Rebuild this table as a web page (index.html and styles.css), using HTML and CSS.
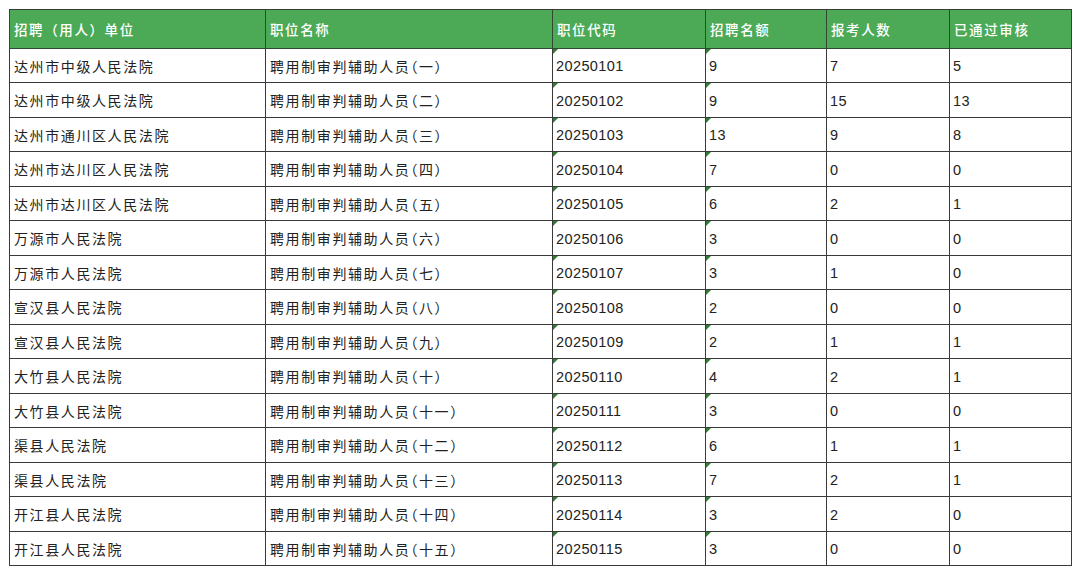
FILE: index.html
```html
<!DOCTYPE html>
<html lang="zh-CN">
<head>
<meta charset="utf-8">
<title>招聘审核</title>
<link rel="stylesheet" href="styles.css">
</head>
<body>
<table class="grid">
<colgroup>
<col class="c1"><col class="c2"><col class="c3"><col class="c4"><col class="c5"><col class="c6">
</colgroup>
<thead>
<tr><th>招聘（用人）单位</th><th>职位名称</th><th>职位代码</th><th>招聘名额</th><th>报考人数</th><th>已通过审核</th></tr>
</thead>
<tbody>
<tr><td>达州市中级人民法院</td><td>聘用制审判辅助人员（一）</td><td class="num mark">20250101</td><td class="num mark">9</td><td class="num">7</td><td class="num">5</td></tr>
<tr><td>达州市中级人民法院</td><td>聘用制审判辅助人员（二）</td><td class="num mark">20250102</td><td class="num mark">9</td><td class="num">15</td><td class="num">13</td></tr>
<tr><td>达州市通川区人民法院</td><td>聘用制审判辅助人员（三）</td><td class="num mark">20250103</td><td class="num mark">13</td><td class="num">9</td><td class="num">8</td></tr>
<tr><td>达州市达川区人民法院</td><td>聘用制审判辅助人员（四）</td><td class="num mark">20250104</td><td class="num mark">7</td><td class="num">0</td><td class="num">0</td></tr>
<tr><td>达州市达川区人民法院</td><td>聘用制审判辅助人员（五）</td><td class="num mark">20250105</td><td class="num mark">6</td><td class="num">2</td><td class="num">1</td></tr>
<tr><td>万源市人民法院</td><td>聘用制审判辅助人员（六）</td><td class="num mark">20250106</td><td class="num mark">3</td><td class="num">0</td><td class="num">0</td></tr>
<tr><td>万源市人民法院</td><td>聘用制审判辅助人员（七）</td><td class="num mark">20250107</td><td class="num mark">3</td><td class="num">1</td><td class="num">0</td></tr>
<tr><td>宣汉县人民法院</td><td>聘用制审判辅助人员（八）</td><td class="num mark">20250108</td><td class="num mark">2</td><td class="num">0</td><td class="num">0</td></tr>
<tr><td>宣汉县人民法院</td><td>聘用制审判辅助人员（九）</td><td class="num mark">20250109</td><td class="num mark">2</td><td class="num">1</td><td class="num">1</td></tr>
<tr><td>大竹县人民法院</td><td>聘用制审判辅助人员（十）</td><td class="num mark">20250110</td><td class="num mark">4</td><td class="num">2</td><td class="num">1</td></tr>
<tr><td>大竹县人民法院</td><td>聘用制审判辅助人员（十一）</td><td class="num mark">20250111</td><td class="num mark">3</td><td class="num">0</td><td class="num">0</td></tr>
<tr><td>渠县人民法院</td><td>聘用制审判辅助人员（十二）</td><td class="num mark">20250112</td><td class="num mark">6</td><td class="num">1</td><td class="num">1</td></tr>
<tr><td>渠县人民法院</td><td>聘用制审判辅助人员（十三）</td><td class="num mark">20250113</td><td class="num mark">7</td><td class="num">2</td><td class="num">1</td></tr>
<tr><td>开江县人民法院</td><td>聘用制审判辅助人员（十四）</td><td class="num mark">20250114</td><td class="num mark">3</td><td class="num">2</td><td class="num">0</td></tr>
<tr><td>开江县人民法院</td><td>聘用制审判辅助人员（十五）</td><td class="num mark">20250115</td><td class="num mark">3</td><td class="num">0</td><td class="num">0</td></tr>
</tbody>
</table>
</body>
</html>
```
FILE: styles.css
```css
html, body {
  margin: 0;
  padding: 0;
  background: #ffffff;
}
body {
  padding: 9px 0 0 9px;
  font-family: "Noto Sans CJK SC", "Liberation Sans", sans-serif;
  color: #222222;
}
.grid {
  border-collapse: collapse;
  table-layout: fixed;
  width: 1062px;
}
.c1 { width: 256px; }
.c2 { width: 287px; }
.c3 { width: 153px; }
.c4 { width: 121px; }
.c5 { width: 123px; }
.c6 { width: 122px; }
.grid th, .grid td {
  border: 1.5px solid #3a3a3a;
  padding: 0 0 0 4px;
  text-align: left;
  white-space: nowrap;
  overflow: hidden;
}
.grid th {
  background: #4caa57;
  color: #ffffff;
  height: 37.5px;
  font-size: 13.5px;
  font-weight: 500;
  letter-spacing: 1.6px;
  border-color: #2f4a30;
}
.grid thead tr th {
  border-top-color: #3a3a3a;
}
.grid td {
  height: 32.5px;
  font-size: 14px;
  letter-spacing: 1.6px;
  font-feature-settings: "halt";
  padding-top: 1px;
}
.grid td.num {
  height: 31.5px;
  font-family: "Liberation Sans", Arial, sans-serif;
  letter-spacing: 0.4px;
  font-size: 14.5px;
  padding-left: 3px;
  padding-top: 2px;
}
.grid td.mark {
  position: relative;
}
.grid td.mark::before {
  content: "";
  position: absolute;
  top: 0;
  left: 0;
  width: 0;
  height: 0;
  border-top: 5px solid #2e7d32;
  border-right: 5px solid transparent;
}
```
